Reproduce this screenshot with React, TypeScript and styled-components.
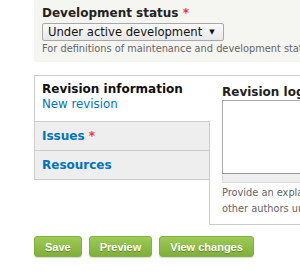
import React from 'react';
import styled, { createGlobalStyle } from 'styled-components';

const GlobalStyle = createGlobalStyle`
  html, body {
    margin: 0;
    padding: 0;
    background: #fff;
    overflow: hidden;
  }
  body {
    font-family: 'DejaVu Sans', 'Noto Sans', sans-serif;
    color: #333;
  }
`;

const Page = styled.div`
  width: 300px;
  height: 279px;
  padding-left: 34px;
  box-sizing: border-box;
  overflow: hidden;
`;

const StatusPanel = styled.div`
  width: 400px;
  height: 62px;
  background: #f5f5f1;
  padding: 5px 8px 0;
  box-sizing: border-box;
`;

const FieldLabel = styled.label`
  display: block;
  font-size: 12px;
  font-weight: bold;
  color: #222;
  line-height: 16px;
`;

const Required = styled.span`
  color: #e33;
`;

const SelectBox = styled.div`
  display: inline-flex;
  align-items: center;
  gap: 7px;
  height: 18px;
  margin-top: 1px;
  padding: 0 8px 0 5px;
  border: 1px solid #a8a8a8;
  border-radius: 2px;
  background: linear-gradient(#fafafa, #e8e8e8);
  font-size: 11.6px;
  color: #111;
  box-sizing: border-box;
`;

const Caret = styled.span`
  font-size: 7px;
`;

const Help = styled.div`
  margin-top: 2px;
  font-size: 9.8px;
  color: #666;
  white-space: nowrap;
`;

const Tabs = styled.div`
  display: flex;
  width: 420px;
  margin-top: 13px;
  border-top: 1px solid #ccc;
`;

const TabList = styled.ul`
  list-style: none;
  margin: 0;
  padding: 0;
  width: 175px;
  flex: none;
  align-self: flex-start;
  border-left: 1px solid #ccc;
  border-bottom: 1px solid #ccc;
  box-sizing: border-box;
`;

const Tab = styled.li<{ $active?: boolean }>`
  position: relative;
  z-index: 1;
  box-sizing: border-box;
  padding: ${(p) => (p.$active ? '6px 7px 0' : '0 7px')};
  height: ${(p) => (p.$active ? '45px' : '29px')};
  display: flex;
  flex-direction: column;
  justify-content: ${(p) => (p.$active ? 'flex-start' : 'center')};
  background: ${(p) => (p.$active ? '#fff' : '#eee')};
  border-top: ${(p) => (p.$active ? 'none' : '1px solid #ccc')};
  border-right: ${(p) => (p.$active ? '1px solid #fff' : '1px solid #ccc')};
  margin-right: -1px;
  font-size: 12px;
  line-height: 15px;
`;

const TabTitle = styled.strong<{ $link?: boolean }>`
  color: ${(p) => (p.$link ? '#0074bd' : '#111')};
  font-weight: bold;
`;

const TabSummary = styled.span`
  color: #0074bd;
  font-size: 11.8px;
`;

const Pane = styled.div`
  flex: 1;
  height: 149px;
  border-left: 1px solid #ccc;
  border-bottom: 1px solid #ccc;
  padding: 8px 12px 0;
  box-sizing: border-box;
`;

const PaneLabel = styled.div`
  font-size: 12px;
  font-weight: bold;
  color: #222;
  line-height: 16px;
`;

const TextArea = styled.div`
  height: 74px;
  border: 1px solid #aaa;
  border-bottom-color: #999;
  background: #fff;
  box-sizing: border-box;
`;

const Grippie = styled.div`
  height: 8px;
  background: #eee;
  border: 1px solid #ddd;
  border-top: none;
`;

const PaneHelp = styled.div`
  margin-top: 2px;
  font-size: 9.8px;
  line-height: 16px;
  color: #666;
  white-space: nowrap;
`;

const Actions = styled.div`
  display: flex;
  gap: 7px;
  margin-top: 11px;
`;

const Button = styled.button`
  height: 21px;
  padding: 0 10px;
  border: 1px solid #84b03e;
  border-radius: 3px;
  background: linear-gradient(#9dcb55, #7faf38);
  color: #fff;
  font-family: 'Liberation Sans', Arial, sans-serif;
  font-size: 11px;
  font-weight: bold;
  text-shadow: 0 1px 0 rgba(60, 90, 20, 0.5);
  box-shadow: 0 1px 1px rgba(0, 0, 0, 0.15);
  cursor: pointer;
`;

export default function App() {
  return (
    <Page>
      <GlobalStyle />
      <StatusPanel>
        <FieldLabel>
          Development status <Required>*</Required>
        </FieldLabel>
        <SelectBox>
          Under active development <Caret>▼</Caret>
        </SelectBox>
        <Help>For definitions of maintenance and development status, see the handbook.</Help>
      </StatusPanel>
      <Tabs>
        <TabList>
          <Tab $active>
            <TabTitle>Revision information</TabTitle>
            <TabSummary>New revision</TabSummary>
          </Tab>
          <Tab>
            <TabTitle $link>
              Issues <Required>*</Required>
            </TabTitle>
          </Tab>
          <Tab>
            <TabTitle $link>Resources</TabTitle>
          </Tab>
        </TabList>
        <Pane>
          <PaneLabel>Revision log message</PaneLabel>
          <TextArea />
          <Grippie />
          <PaneHelp>
            Provide an explanation of the changes you are making.
            <br />
            other authors understand your motivations.
          </PaneHelp>
        </Pane>
      </Tabs>
      <Actions>
        <Button>Save</Button>
        <Button>Preview</Button>
        <Button>View changes</Button>
      </Actions>
    </Page>
  );
}
